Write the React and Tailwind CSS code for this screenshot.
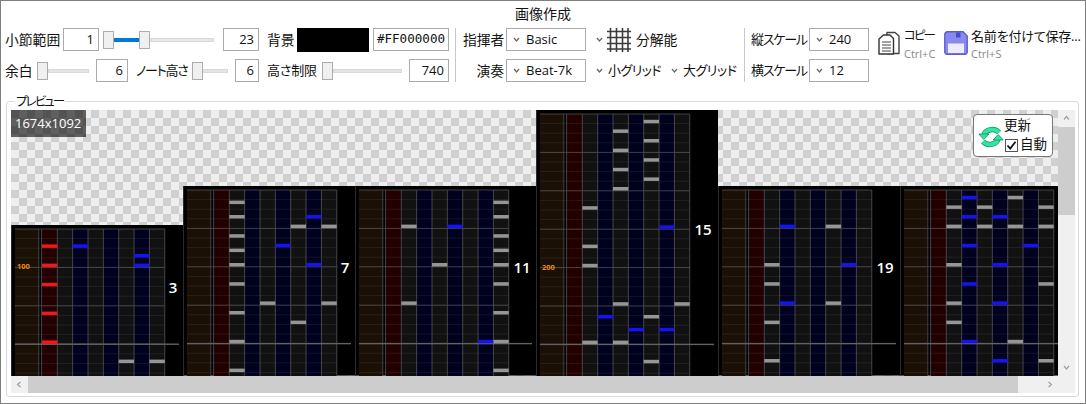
import React from 'react';

const LANE_STEP = 15.35;
const LANE_START = 46.3;
const ROW = 9.6;

// notes are [lane, row]; lane 0 is the scratch lane, row counts up from the judge line
const MEASURES = [
    {
        width: 172, height: 151.2, label: '3', labelX: 162, labelRow: 6, bpm: '100',
        notes: [[0, 0], [0, 3], [0, 6], [0, 8], [0, 10], [2, 10], [6, 9], [6, 8], [5, -2], [7, -2]],
    },
    {
        width: 172, height: 189.6, label: '7', labelX: 162, labelRow: 8,
        notes: [[1, 14.5], [1, 13], [1, 11], [1, 9.5], [1, 8], [1, 6], [1, 3], [1, 0], [1, -3], [3, 4], [4, 10], [5, 12], [5, 2], [6, 13], [6, 8], [7, 12], [7, 4]],
    },
    {
        width: 181, height: 189.6, label: '11', labelX: 167, labelRow: 8,
        notes: [[1, 12], [1, 4], [3, 8], [4, 12], [6, 0], [7, 14.5], [7, 13], [7, 11], [7, 9.5], [7, 8], [7, 6], [7, 3], [7, 0], [7, -3]],
    },
    {
        width: 182, height: 266.4, label: '15', labelX: 167, labelRow: 12, bpm: '200',
        notes: [[1, 14], [1, 10], [1, 8], [1, 0], [2, 2.67], [3, 22], [3, 20], [3, 18], [3, 16], [3, 4], [3, 0], [4, 1.33], [5, 23], [5, 21], [5, 19], [5, 17], [5, 2.67], [5, -2], [6, 12], [6, 1.33], [7, 4]],
    },
    {
        width: 182, height: 189.6, label: '19', labelX: 167, labelRow: 8,
        notes: [[1, 8], [1, 6], [1, 2], [1, -2], [2, 12], [2, 4], [5, 12], [5, 4], [6, 8]],
    },
    {
        // runs under the scrollbar, its measure number is out of view
        width: 162, height: 189.6,
        notes: [[1, 14], [1, 12], [1, 8], [1, 4], [1, 2], [2, 15], [2, 13], [2, 10], [2, 6], [2, 0], [3, 14], [3, 12], [4, 13], [4, 8], [4, 4], [4, -2], [5, 15], [5, 12], [5, 0], [6, 10], [7, 14], [7, 12], [7, 6], [7, -2]],
    },
];

const Measure = ({ width, height, label, labelX, labelRow, bpm, notes }) => {
    const judgeY = height - 32;
    const lines = [];
    for (let i = -3; judgeY - i * ROW >= 3.9; i++) lines.push(i);
    const laneEnd = LANE_START + 7 * LANE_STEP;
    const laneTop = 4;

    return (
        <svg width={width} height={height} className="block shrink-0">
            <rect x="0" y="0" width={width} height={height} fill="#000" />
            <rect x="0" y="0" width="1" height={height} fill="#2a2a2a" />
            <rect x="4" y={laneTop} width="23.5" height={height} fill="#1b1005" />
            <rect x="31" y={laneTop} width={LANE_START - 31} height={height} fill="#220000" />
            {[1, 2, 3, 4, 5, 6, 7].map((l) => (
                <rect
                    key={l}
                    x={LANE_START + (l - 1) * LANE_STEP}
                    y={laneTop}
                    width={LANE_STEP}
                    height={height}
                    fill={l % 2 ? '#111111' : '#00001f'}
                />
            ))}
            {lines.map((i) => (
                <line
                    key={i}
                    x1="4"
                    x2={laneEnd}
                    y1={judgeY - i * ROW}
                    y2={judgeY - i * ROW}
                    stroke="#fff"
                    strokeOpacity={i % 4 === 0 ? 0.24 : 0.07}
                />
            ))}
            {[27.8, 30.6, 46.3, 61.65, 77, 92.35, 107.7, 123.05, 138.4, 153.75].map((x) => (
                <line key={x} x1={x} x2={x} y1={laneTop} y2={height} stroke="#4c4c54" strokeWidth="0.9" />
            ))}
            <rect x="4" y={judgeY - 0.7} width={width - 8} height="1.4" fill="#626262" />
            {notes.map(([lane, row], i) => {
                const x = lane === 0 ? 31 : LANE_START + (lane - 1) * LANE_STEP;
                const w = lane === 0 ? 15.3 : LANE_STEP;
                const fill = lane === 0 ? '#f01818' : lane % 2 ? '#969696' : '#1414f0';
                return <rect key={i} x={x} y={judgeY - row * ROW - 3.8} width={w} height="3.5" fill={fill} />;
            })}
            {bpm && (
                <text x="6" y={judgeY - 8 * ROW - 1} fill="#e8890c" dominantBaseline="central" className="text-[7.5px] font-bold">
                    {bpm}
                </text>
            )}
            {label && (
                <text
                    x={labelX}
                    y={judgeY - labelRow * ROW}
                    fill="#fff"
                    textAnchor="middle"
                    dominantBaseline="central"
                    className="text-[15px] font-semibold"
                >
                    {label}
                </text>
            )}
        </svg>
    );
};

const Chevron = ({ className = '', up = false, left = false, right = false, color = '#666' }) => {
    const points = up ? '1,4.5 3.5,1.5 6,4.5' : left ? '4.5,1 1.5,3.5 4.5,6' : right ? '2.5,1 5.5,3.5 2.5,6' : '1,2 3.5,5 6,2';
    return (
        <svg width="7" height="7" viewBox="0 0 7 7" className={`shrink-0 ${className}`}>
            <polyline points={points} fill="none" stroke={color} strokeWidth="1.2" />
        </svg>
    );
};

const NumBox = ({ value, className = '' }) => (
    <div className={`h-[23px] border border-[#ababab] bg-white flex items-center justify-end pr-1 shrink-0 ${className}`}>
        {value}
    </div>
);

const Combo = ({ value, className = '' }) => (
    <div className={`h-[23px] border border-[#ababab] bg-white flex items-center pl-[6px] shrink-0 ${className}`}>
        <Chevron />
        <span className="ml-[6px]">{value}</span>
    </div>
);

const Thumb = () => <div className="w-[11px] h-[18px] border border-[#acacac] bg-[#f0f0f0] shrink-0" />;

const Track = ({ className = '' }) => <div className={`h-[4px] flex-1 bg-[#e4e6e4] border border-[#d8dad8] ${className}`} />;

const Slider = ({ className = '' }) => (
    <div className={`h-[23px] flex items-center shrink-0 ${className}`}>
        <Thumb />
        <Track />
    </div>
);

const Label = ({ children, className = '' }) => <span className={`whitespace-nowrap shrink-0 ${className}`}>{children}</span>;

const GridIcon = ({ className = '' }) => (
    <svg width="24" height="24" viewBox="0 0 24 24" className={`shrink-0 ${className}`}>
        <path d="M3.5 0V24M9.5 0V24M15.5 0V24M21 0V24M0 3.5H24M0 9.5H24M0 15.5H24M0 21H24" stroke="#3c3c3c" strokeWidth="1.6" fill="none" />
    </svg>
);

const CopyIcon = ({ className = '' }) => (
    <svg width="22" height="24" viewBox="0 0 22 24" className={`shrink-0 ${className}`}>
        <path d="M9 1.5H17L21 5V22.5H9Z" fill="#fff" stroke="#444" strokeWidth="1.4" strokeLinejoin="round" />
        <path d="M5.5 4H12L15.5 7.5V23H1V8Z" fill="#fff" stroke="#333" strokeWidth="1.4" strokeLinejoin="round" />
        <path d="M4 11H13M4 14H13M4 17H13M4 20H13" stroke="#444" strokeWidth="1.1" />
    </svg>
);

const SaveIcon = ({ className = '' }) => (
    <svg width="24" height="24" viewBox="0 0 24 24" className={`shrink-0 ${className}`}>
        <path d="M3.5 0.8H19L23.2 5V21.5A2 2 0 0 1 21.2 23.2H2.8A2 2 0 0 1 0.8 21.5V3.5A3 3 0 0 1 3.5 0.8Z" fill="#8a8aee" stroke="#5a5ad2" strokeWidth="1.4" />
        <rect x="4" y="12.5" width="16" height="9.5" fill="#ececff" />
        <rect x="12" y="1.5" width="4.5" height="5" fill="#4a4ac8" />
    </svg>
);

const RefreshIcon = ({ className = '' }) => (
    <svg width="26" height="24" viewBox="0 0 26 24" className={`shrink-0 ${className}`}>
        <g fill="none" strokeLinecap="butt">
            <path d="M6 10C7 5 16 2 21 7.5" stroke="#0f8f62" strokeWidth="5.4" />
            <path d="M20 14C19 19 10 22 5 16.5" stroke="#0f8f62" strokeWidth="5.4" />
            <path d="M6 10C7 5 16 2 21 7.5" stroke="#35e3a0" strokeWidth="4" />
            <path d="M20 14C19 19 10 22 5 16.5" stroke="#35e3a0" strokeWidth="4" />
        </g>
        <path d="M0.8 9H11L5.8 14.5Z" fill="#35e3a0" stroke="#0f8f62" strokeWidth="0.8" />
        <path d="M25.2 15H15L20.2 9.5Z" fill="#35e3a0" stroke="#0f8f62" strokeWidth="0.8" />
    </svg>
);

export default function App() {
    return (
        <div className="w-[1086px] h-[404px] border border-[#7f7f7f] bg-white text-[#111] text-[13.5px] leading-none font-['Open_Sans','Noto_Sans_CJK_JP',sans-serif] [font-feature-settings:'palt'] overflow-hidden">
            {/* Ribbon title */}
            <div className="h-[27px] flex justify-center pt-[6px] text-[14px]">画像作成</div>

            {/* Ribbon body */}
            <div className="flex h-[54px] text-[13px]">
                <div className="w-[455px] shrink-0 border-r border-[#c8c8c8] pl-[4px] flex flex-col gap-[8px]">
                    <div className="flex items-center h-[23px]">
                        <Label className="w-[55px] text-[13.8px]">小節範囲</Label>
                        <NumBox value="1" className="ml-[3px] w-[36px]" />
                        <div className="ml-[4px] w-[111px] h-[23px] flex items-center shrink-0">
                            <Thumb />
                            <div className="w-[25px] h-[4px] bg-[#0078d7]" />
                            <Thumb />
                            <Track />
                        </div>
                        <NumBox value="23" className="ml-[9px] w-[36px]" />
                        <Label className="ml-[8px] w-[28px] text-[13.8px]">背景</Label>
                        <div className="ml-[2px] w-[72px] h-[24px] bg-black shrink-0" />
                        <div className="ml-[4px] w-[76px] h-[23px] border border-[#ababab] flex items-center justify-center text-[12.6px] font-['DejaVu_Sans_Mono',monospace] shrink-0">
                            #FF000000
                        </div>
                    </div>
                    <div className="flex items-center h-[23px]">
                        <Label className="w-[27px] text-[13.8px]">余白</Label>
                        <Slider className="ml-[5px] w-[52px]" />
                        <NumBox value="6" className="ml-[7px] w-[32px]" />
                        <Label className="ml-[8px] w-[52px] tracking-[-1.2px]">ノート高さ</Label>
                        <Slider className="ml-[4px] w-[36px]" />
                        <NumBox value="6" className="ml-[7px] w-[24px]" />
                        <Label className="ml-[8px] w-[51px] tracking-[-0.2px]">高さ制限</Label>
                        <Slider className="ml-[4px] w-[80px]" />
                        <NumBox value="740" className="ml-[7px] w-[40px]" />
                    </div>
                </div>

                <div className="w-[289px] shrink-0 border-r border-[#c8c8c8] pl-[7px] flex flex-col gap-[8px]">
                    <div className="flex items-center h-[23px]">
                        <Label className="w-[41px] text-right text-[13.8px]">指揮者</Label>
                        <Combo value="Basic" className="ml-[2px] w-[80px]" />
                        <Chevron className="ml-[10px]" />
                        <GridIcon className="ml-[4px]" />
                        <Label className="ml-[5px] text-[13.8px]">分解能</Label>
                    </div>
                    <div className="flex items-center h-[23px]">
                        <Label className="w-[41px] text-right text-[13.8px]">演奏</Label>
                        <Combo value="Beat-7k" className="ml-[2px] w-[80px]" />
                        <Chevron className="ml-[10px]" />
                        <Label className="ml-[5px] w-[53px] tracking-[-0.6px]">小グリッド</Label>
                        <Chevron className="ml-[10px]" />
                        <Label className="ml-[5px] tracking-[-0.5px]">大グリッド</Label>
                    </div>
                </div>

                <div className="flex-1 pl-[6px] flex flex-col gap-[8px]">
                    <div className="flex items-start h-[23px]">
                        <Label className="w-[55px] h-[23px] flex items-center tracking-[-1.2px]">縦スケール</Label>
                        <Combo value="240" className="ml-[3px] w-[60px]" />
                        <CopyIcon className="ml-[9px] mt-[3px]" />
                        <div className="ml-[4px] w-[30px] shrink-0">
                            <div className="h-[17px] flex items-center whitespace-nowrap text-[12.5px] tracking-[-2px]">コピー</div>
                            <div className="h-[17px] flex items-center text-[11px] text-[#8a8a8a] whitespace-nowrap">Ctrl+C</div>
                        </div>
                        <SaveIcon className="ml-[10px] mt-[3px]" />
                        <div className="ml-[3px] shrink-0">
                            <div className="h-[17px] flex items-center whitespace-nowrap tracking-[-0.2px]">名前を付けて保存...</div>
                            <div className="h-[17px] flex items-center text-[11px] text-[#8a8a8a]">Ctrl+S</div>
                        </div>
                    </div>
                    <div className="flex items-center h-[23px]">
                        <Label className="w-[55px] tracking-[-1.2px]">横スケール</Label>
                        <Combo value="12" className="ml-[3px] w-[60px]" />
                    </div>
                </div>
            </div>

            {/* Preview group */}
            <div className="relative ml-[5px] mt-[19px] w-[1073px] h-[296px] border border-[#d5dae0] rounded-[3px] pl-[4px] pt-[8px]">
                <span className="absolute left-[7px] -top-[7px] px-[2px] h-[14px] bg-white flex items-center text-[12.5px] tracking-[-1.9px]">プレビュー</span>

                <div className="grid grid-cols-[1047px_17px] grid-rows-[266px_17px] w-[1064px] h-[283px]">
                    <div className="relative overflow-hidden flex items-end bg-[conic-gradient(#eeeeee_25%,#d0d0d0_0_50%,#eeeeee_0_75%,#d0d0d0_0)] bg-[length:16px_16px]">
                        {MEASURES.map((m, i) => (
                            <Measure key={i} {...m} />
                        ))}

                        <div className="absolute left-0 top-0 w-[75px] h-[27px] bg-black/60 text-white text-[13px] flex items-center pl-[4px]">
                            1674x1092
                        </div>

                        <div className="absolute left-[962px] top-[4px] w-[80px] h-[43px] bg-white border border-[#777] rounded-[4px] flex items-center pl-[4px]">
                            <RefreshIcon className="mt-[3px]" />
                            <div className="-ml-[1px]">
                                <div className="h-[18px] flex items-center pl-[1px]">更新</div>
                                <div className="flex items-center h-[18px] mt-[1px]">
                                    <div className="w-[13px] h-[13px] border border-[#555] flex items-center justify-center ml-[2px]">
                                        <svg width="11" height="11" viewBox="0 0 11 11">
                                            <path d="M1.5 5.5L4.2 8.5L9.5 1.8" fill="none" stroke="#111" strokeWidth="1.8" />
                                        </svg>
                                    </div>
                                    <span className="ml-[2px]">自動</span>
                                </div>
                            </div>
                        </div>
                    </div>

                    {/* Vertical scrollbar */}
                    <div className="bg-[#f0f0f0] flex flex-col">
                        <div className="h-[17px] flex items-center justify-center">
                            <Chevron up color="#a0a0a0" />
                        </div>
                        <div className="h-[88px] bg-[#cdcdcd]" />
                        <div className="flex-1" />
                        <div className="h-[17px] flex items-center justify-center">
                            <Chevron color="#a0a0a0" />
                        </div>
                    </div>

                    {/* Horizontal scrollbar */}
                    <div className="bg-[#f0f0f0] flex">
                        <div className="w-[17px] flex items-center justify-center">
                            <Chevron left color="#a0a0a0" />
                        </div>
                        <div className="w-[990px] bg-[#cdcdcd]" />
                        <div className="flex-1" />
                        <div className="w-[17px] flex items-center justify-center">
                            <Chevron right color="#a0a0a0" />
                        </div>
                    </div>
                    <div className="bg-[#f0f0f0]" />
                </div>
            </div>
        </div>
    );
}
